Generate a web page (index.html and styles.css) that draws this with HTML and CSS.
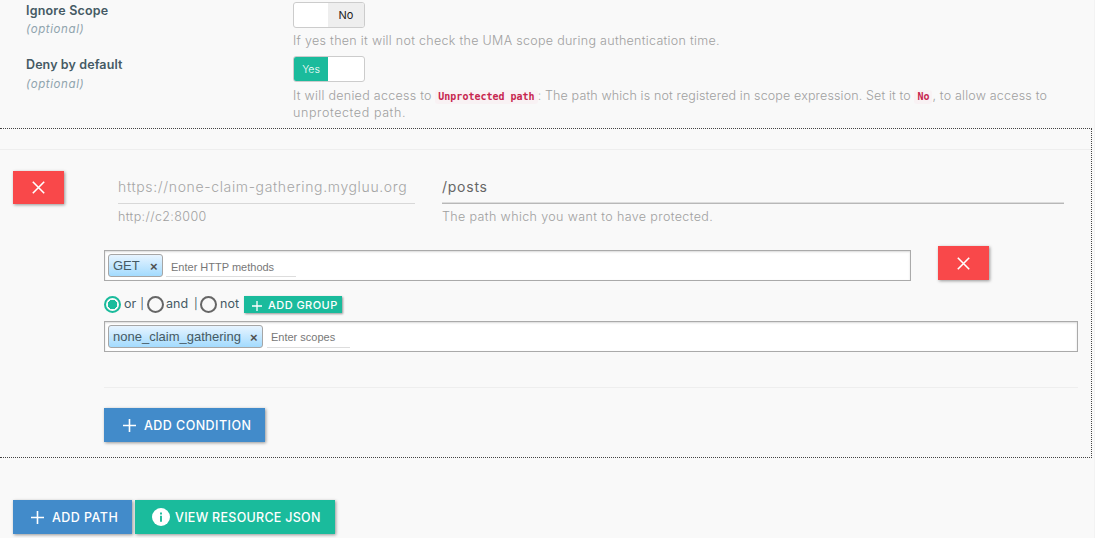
FILE: index.html
```html
<!DOCTYPE html>
<html lang="en">
<head>
<meta charset="utf-8">
<title>Resources</title>
<link rel="stylesheet" href="styles.css">
</head>
<body>
<main class="page">
  <section class="options">
    <div class="label"><div class="name name-ignore">Ignore Scope</div><div class="optional">(optional)</div></div>
    <div class="control">
      <div class="switch"><span class="half blank"></span><span class="half off">No</span></div>
      <p class="help help-ignore">If yes then it will not check the UMA scope during authentication time.</p>
    </div>
    <div class="label"><div class="name name-deny">Deny by default</div><div class="optional optional-deny">(optional)</div></div>
    <div class="control">
      <div class="switch"><span class="half on">Yes</span><span class="half blank"></span></div>
      <p class="help help-deny"><span class="s1">It will denied access to</span> <code>Unprotected path</code><span class="s2">: The path which is not registered in scope expression. Set it to</span> <code>No</code><span class="s3">, to allow access to</span><br><span class="s4">unprotected path.</span></p>
    </div>
  </section>

  <section class="resource">
    <div class="path-row">
      <button class="btn danger" aria-label="Remove path"><svg width="13" height="13" viewBox="0 0 13 13"><path d="M.8.8l11.4 11.4M12.2.8L.8 12.2" stroke="#fff" stroke-width="1.6"/></svg></button>
      <div class="field host">
        <div class="value">https://none-claim-gathering.mygluu.org</div>
        <div class="hint">http://c2:8000</div>
      </div>
      <div class="field path">
        <div class="value">/posts</div>
        <div class="hint">The path which you want to have protected.</div>
      </div>
    </div>
    <div class="conditions">
      <div class="method-row">
        <div class="tags methods"><span class="tag"><span class="tag-get">GET</span><b>×</b></span><span class="entry entry-method"><span>Enter HTTP methods</span></span></div>
        <button class="btn danger" aria-label="Remove condition"><svg width="13" height="13" viewBox="0 0 13 13"><path d="M.8.8l11.4 11.4M12.2.8L.8 12.2" stroke="#fff" stroke-width="1.6"/></svg></button>
      </div>
      <div class="logic">
        <i class="radio checked"></i><span class="t-or">or<span class="bar">|</span></span>
        <i class="radio"></i><span class="t-and">and<span class="bar">|</span></span>
        <i class="radio"></i><span class="t-not">not</span>
        <button class="btn group"><svg width="10" height="10" viewBox="0 0 10 10"><path d="M5 0v10M0 5h10" stroke="#fff" stroke-width="1.3"/></svg><span>ADD GROUP</span></button>
      </div>
      <div class="tags scopes"><span class="tag"><span class="tag-scope">none_claim_gathering</span><b>×</b></span><span class="entry entry-scope"><span>Enter scopes</span></span></div>
      <div class="rule"></div>
      <button class="btn primary add-condition"><svg width="13" height="13" viewBox="0 0 13 13"><path d="M6.5 0v13M0 6.5h13" stroke="#fff" stroke-width="1.6"/></svg><span>ADD CONDITION</span></button>
    </div>
  </section>

  <footer class="actions">
    <button class="btn primary add-path"><svg width="13" height="13" viewBox="0 0 13 13"><path d="M6.5 0v13M0 6.5h13" stroke="#fff" stroke-width="1.6"/></svg><span>ADD PATH</span></button>
    <button class="btn success view-json"><svg width="18" height="18" viewBox="0 0 18 18"><circle cx="9" cy="9" r="9" fill="#fff"/><path d="M9 4.4v2M9 7.8v6" stroke="#1abb9c" stroke-width="1.9"/></svg><span>VIEW RESOURCE JSON</span></button>
  </footer>
</main>
</body>
</html>
```
FILE: styles.css
```css
* { box-sizing: border-box; }
body { margin: 0; background: #f9f9f9; color: #455a64; font: 13px/16px Inter, "Open Sans", sans-serif; overflow: hidden; }
.page { width: 1095px; height: 538px; overflow: hidden; border-right: 1px solid #f3f3f3; }
p { margin: 0; }
span { white-space: nowrap; }

.options { display: grid; grid-template-columns: 267px 780px; grid-template-rows: 54px 72px; padding: 2px 0 0 26px; }
.name { font-size: 12.5px; font-weight: 600; line-height: 17px; white-space: nowrap; }
.name-ignore { letter-spacing: .2px; }
.name-deny { letter-spacing: .1px; }
.optional { color: #90a4ae; font-size: 11.5px; font-style: italic; line-height: 17px; margin-top: 2px; letter-spacing: .6px; }
.optional-deny { margin-top: 3px; }
.switch { display: flex; width: 72px; height: 26px; border: 1px solid #ccc; border-radius: 3px; overflow: hidden; background: #fff; }
.half { width: 34px; font-size: 11px; line-height: 25px; text-align: center; }
.off { width: 36px; background: #eee; color: #222; }
.on { background: #1abb9c; color: #fff; font-size: 10.5px; font-weight: 300; }
.help { color: #a0a0a0; font-weight: 300; font-size: 12.5px; line-height: 17px; white-space: nowrap; }
.help-ignore { padding-top: 4px; letter-spacing: .3px; }
.help-deny { padding-top: 5px; }
.s1 { letter-spacing: .28px; }
.s2 { letter-spacing: .14px; }
.s3 { letter-spacing: .2px; }
.s4 { letter-spacing: .6px; }
code { display: inline-block; color: #c7254e; background: #f9f2f4; border-radius: 3px; font: bold 10px/14px "DejaVu Sans Mono", monospace; padding: 0 3px; }

.resource { width: 1092px; height: 330px; border: 1px dotted #444; border-left: 0; padding-top: 20px; }
.path-row { display: flex; height: 97px; border-top: 1px solid #eee; padding: 21px 0 0 13px; }
.btn { display: flex; align-items: center; border: 0; border-radius: 0; padding: 0; color: #fff; font: 500 12.5px/16px Inter, "Open Sans", sans-serif; box-shadow: 1px 1px 3px rgba(0,0,0,.4); height: 34px; }
.btn svg { flex: none; }
.danger { width: 51px; height: 33px; background: #f9484a; justify-content: center; }
.field .value { font-size: 14px; line-height: 18px; padding-top: 7px; height: 33px; border-bottom: 1px solid #d8d8d8; white-space: nowrap; }
.hint { color: #a0a0a0; font-size: 12.5px; font-weight: 300; line-height: 16px; padding-top: 5px; letter-spacing: .38px; white-space: nowrap; }
.host { width: 297px; margin-left: 54px; }
.host .value { color: #a6a6a6; font-weight: 300; letter-spacing: .64px; }
.path { width: 622px; margin-left: 27px; }
.path .value { color: #666; border-bottom: 1px solid #b8b8b8; box-shadow: inset 0 -1px #dcdcdc; letter-spacing: .75px; }

.conditions { padding-left: 104px; }
.method-row { display: flex; gap: 27px; }
.tags { display: flex; align-items: flex-start; height: 31px; padding: 3px; background: #fff; border: 1px solid #aaa; box-shadow: inset 0 1px 2px rgba(0,0,0,.15); font-family: "Liberation Sans", Arial, sans-serif; }
.methods { width: 807px; margin-top: 4px; }
.method-row .danger { height: 34px; }
.tag { display: flex; align-items: center; height: 23px; padding: 0 4px; gap: 9px; border: 1px solid #a6a6a6; border-radius: 3px; background: linear-gradient(#e7f4ff, #a3dbfe); font-size: 13px; color: #455a64; }
.tag-get { width: 28px; }
.tag b { font-size: 13px; color: #505050; width: 8px; padding-top: 2px; }
.entry { display: block; height: 23px; border-bottom: 1px solid #ddd; color: #777; font-size: 11px; line-height: 26px; padding-left: 5px; margin-left: 3px; }
.entry-method { width: 130px; }
.entry-scope { width: 83px; margin-left: 4px; padding-left: 4px; line-height: 25px; }
.logic { display: flex; align-items: center; height: 17px; margin-top: 15px; }
.logic > span { font-size: 12.5px; line-height: 14px; padding-bottom: 2px; }
.radio { width: 17px; height: 17px; border: 2px solid #666; border-radius: 50%; flex: none; }
.checked { border-color: #1abb9c; background: radial-gradient(circle, #1abb9c 4.5px, transparent 5px); }
.logic .t-or { width: 26px; padding-left: 3px; }
.logic .t-and { width: 36px; padding-left: 2px; }
.bar { margin-left: 4px; font-size: 11px; }
.t-and .bar { margin-left: 6px; }
.logic .t-not { width: 27px; padding-left: 3px; }
.group { height: 17px; width: 98px; padding-left: 8px; gap: 6px; background: #1abb9c; font-size: 11px; letter-spacing: .45px; box-shadow: 1px 1px 2px rgba(0,0,0,.4); }
.group svg { margin-top: 2px; }
.scopes { width: 974px; margin-top: 8px; }
.rule { width: 974px; height: 1px; background: #eee; margin: 35px 0 20px; }
.primary { background: #428bca; }
.success { background: #1abb9c; }
.btn > span { padding-top: 2px; }
.group > span { padding-top: 1px; }
.add-condition { width: 161px; padding-left: 19px; gap: 8px; letter-spacing: .45px; }
.actions { display: flex; gap: 3px; padding: 42px 0 0 13px; }
.add-path { width: 119px; padding-left: 18px; gap: 8px; letter-spacing: .45px; }
.view-json { width: 200px; padding-left: 17px; gap: 5px; letter-spacing: .28px; }
```
